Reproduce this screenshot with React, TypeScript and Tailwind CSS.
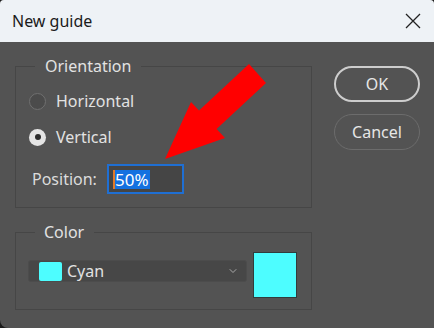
import {ChevronDown} from "lucide-react";

const font = {fontFamily: '"Noto Sans", "Open Sans", sans-serif'};

const Radio = ({checked, label}: {checked?: boolean; label: string}) => {
    return (
        <div className="flex h-[24px] items-center gap-[10px]">
            {checked ? (
                <span className="flex h-[17px] w-[17px] items-center justify-center rounded-full bg-[#e4e4e4]">
                    <span className="h-[6px] w-[6px] rounded-full bg-[#2b2b2b]"></span>
                </span>
            ) : (
                <span className="h-[17px] w-[17px] rounded-full border-[1.5px] border-[#707070] bg-[#4b4b4b]"></span>
            )}
            <span className="text-[16px] text-[#e2e2e2]">{label}</span>
        </div>
    );
};

const App = () => {
    return (
        <div className="h-[328px] w-[434px] bg-[#1b1b1b]" style={font}>
            <div className="relative flex h-full w-full flex-col overflow-hidden rounded-t-[4px] rounded-bl-[8px] bg-[#535353]">
                {/* Title bar */}
                <div className="flex h-[42px] shrink-0 items-center justify-between bg-[#eef2f6] pl-[12px] pr-[13px]">
                    <span className="text-[16px] text-[#1b1b1b]">New guide</span>
                    <svg width="16" height="16" viewBox="0 0 16 16" fill="none" stroke="#222" strokeWidth="1.3">
                        <path d="M1 1 L15 15 M15 1 L1 15" />
                    </svg>
                </div>

                {/* Body */}
                <div className="flex flex-1 pl-[15px]">
                    <div className="flex w-[297px] flex-col">
                        <fieldset className="mt-[14px] border border-[#464646] pb-[13px] pl-[13px]">
                            <legend className="ml-[6px] px-[10px] text-[16px] leading-[20px] text-[#e2e2e2]">Orientation</legend>
                            <div className="mt-[13px] flex flex-col">
                                <Radio label="Horizontal" />
                                <div className="mt-[12px]">
                                    <Radio checked label="Vertical" />
                                </div>
                                <div className="mt-[15px] flex items-center">
                                    <span className="ml-[3px] w-[75px] text-[16px] text-[#dcdcdc]">Position:</span>
                                    <div className="flex h-[30px] w-[77px] items-center border-2 border-[#1f6fd3] bg-[#454545] pl-[4px]">
                                        <span className="flex h-[19px] items-center border-l-2 border-[#e07a2a] bg-[#1471e0] pr-[1px] text-[17px] leading-none text-white">50%</span>
                                    </div>
                                </div>
                            </div>
                        </fieldset>

                        <fieldset className="mt-[14px] border border-[#464646] pb-[11px] pl-[12px]">
                            <legend className="ml-[7px] pl-[9px] pr-[10px] text-[16px] leading-[20px] text-[#e2e2e2]">Color</legend>
                            <div className="mt-[10px] flex items-start gap-[6px]">
                                <div className="mt-[8px] flex h-[22px] w-[219px] items-center rounded-[3px] border border-[#4c4c4c] bg-[#474747] pl-[10px] pr-[7px]">
                                    <span className="h-[19px] w-[23px] rounded-[2px] bg-[#4dfdff]"></span>
                                    <span className="ml-[5px] flex-1 text-[16px] leading-none text-[#e2e2e2]">Cyan</span>
                                    <ChevronDown className="h-[12px] w-[12px] text-[#a8a8a8]" strokeWidth={2} />
                                </div>
                                <div className="h-[46px] w-[44px] border border-[#303c3c] bg-[#4dfdff]"></div>
                            </div>
                        </fieldset>
                    </div>

                    {/* Buttons */}
                    <div className="ml-[22px] flex flex-col gap-[12px] pt-[24px]">
                        <button className="h-[36px] w-[86px] rounded-full border-2 border-[#cdcdcd] text-[16px] text-[#e6e6e6]">OK</button>
                        <button className="h-[36px] w-[86px] rounded-full border-[1.5px] border-[#6c6c6c] text-[16px] text-[#e6e6e6]">Cancel</button>
                    </div>
                </div>

                {/* Red arrow annotation */}
                <svg className="pointer-events-none absolute left-0 top-0" width="434" height="328" viewBox="0 0 434 328">
                    <polygon points="249,64 266,83 216.6,129 225,138 165,159 191,102 199,110.5" fill="#ff0000" />
                </svg>
            </div>
        </div>
    );
};

export default App;
